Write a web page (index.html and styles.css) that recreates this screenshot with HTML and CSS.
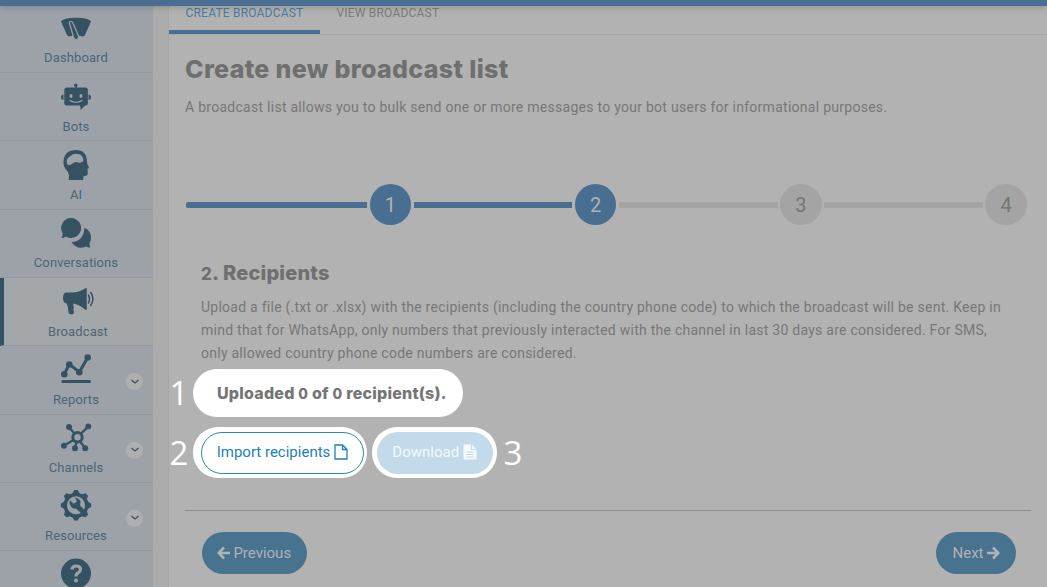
FILE: index.html
```html
<!DOCTYPE html>
<html lang="en">
<head>
<meta charset="utf-8">
<title>Create broadcast</title>
<link rel="stylesheet" href="styles.css">
</head>
<body>
<div class="topbar"></div>
<div class="app">
  <nav class="sidebar">
    <a class="item"><svg class="icon" viewBox="0 0 30 30"><path d="M0 7.500Q2 4 15 3.800Q28 4 30 7.500L24 21Q23 22.800 21 22.300Q15 20.500 9 22.300Q7 22.800 6 21Z"/><path class="needle" d="M8.300 8.500Q10 6 11.700 8.500L17.300 21.500Q18 25.500 15.300 25.500Q12.800 25.500 12.500 23Z"/></svg><span class="label">Dashboard</span></a>
    <a class="item"><svg class="icon" viewBox="0 0 30 30"><rect x="3.300" y="5.500" width="23.600" height="18" rx="2.500"/><path d="M2.500 12.500V18Q0 18 0 15.300Q0 12.500 2.500 12.500ZM27.500 12.500V18Q30 18 30 15.300Q30 12.500 27.500 12.500ZM19 23H24.500L19.800 28Z"/><path class="line thin" d="M15.200 6V3.500"/><circle cx="14.700" cy="3.300" r="1.700"/><g class="hole"><ellipse cx="10" cy="14" rx="1.500" ry="2"/><ellipse cx="20" cy="14" rx="1.500" ry="2"/></g><path class="cut" d="M9 18.500Q15 22 21 18.500"/></svg><span class="label">Bots</span></a>
    <a class="item"><svg class="icon" viewBox="0 0 30 30"><path d="M7.700 30L8 25Q7.500 22 5 19.500Q2 16 2.500 11Q3.500 0 15 0Q25.500 0 26 11.500Q26 13.500 27 15.500L28 17.500Q28 18.500 26.500 18.700L26.800 23.500Q26.600 26.300 22.500 26.200L22 30Z"/><path class="hole" d="M5.700 12Q5.500 8 9 6.500Q12 3 16 4Q20 3.800 21.500 7Q23 9 22 11.500Q20 13.500 15.500 12Q12.500 12.300 11.500 13.500Q8.500 16 6.500 14.500Z"/></svg><span class="label">AI</span></a>
    <a class="item"><svg class="icon" viewBox="0 0 30 30"><path d="M23.500 8.700Q30 11.500 30 19Q30 22.500 28.400 24.800Q28.500 27 29.500 28.500Q27 28.700 25 27.500Q16 31.500 10.500 23Q22.500 22.500 23.500 8.700Z"/><path d="M10.300-1A10 10 0 1 1 4.800 17.500Q3 19.300 .3 18.800Q1.800 17 1.700 14.200A10 10 0 0 1 10.300-1Z"/></svg><span class="label">Conversations</span></a>
    <a class="item active"><svg class="icon" viewBox="0 0 30 30"><path d="M3 5.500H9Q16 5.500 22 1.500Q23.800.500 23.800 2V22Q23.800 23.500 22 22.500Q17 18 10.500 16.500Q9.500 18.500 11 20Q9.700 22 10.800 24V26Q10.800 27.300 9 27.300H7Q5.500 27 5.500 25Q5.500 20 3.700 16.500Q0 16 0 11Q0 6 3 5.500Z"/><path class="line thin" d="M25.500 8Q27.500 12 25.500 16M27.800 5.500Q32 12 27.800 18.500"/></svg><span class="label">Broadcast</span></a>
    <a class="item"><svg class="icon" viewBox="0 0 30 30"><path class="line" d="M3.300 19.200L8.300 9.200L18.300 17.200L26.700 2.500M1.800 26.500H28.500"/><circle cx="3.300" cy="19.200" r="3.300"/><circle cx="8.300" cy="9.500" r="3.300"/><circle cx="18.300" cy="17.300" r="3.300"/><circle cx="26.700" cy="2.500" r="3.300"/></svg><span class="label">Reports</span><span class="toggle"><svg viewBox="0 0 10 6"><path d="M1.500 1L5 4L8.500 1"/></svg></span></a>
    <a class="item"><svg class="icon" viewBox="0 0 30 30"><path class="line mid" d="M8 3L13.500 9.700M27.300 2.400L20 9.800M3 21.500L12.700 16M15.500 18L14 24M19 17.500L24 24"/><circle class="line" cx="16.500" cy="13.300" r="4.700"/><circle cx="8" cy="3" r="3"/><circle cx="27.300" cy="2.400" r="2.900"/><circle cx="3" cy="21.700" r="3"/><circle cx="14" cy="24.200" r="3"/><circle cx="24.200" cy="24.200" r="3"/></svg><span class="label">Channels</span><span class="toggle"><svg viewBox="0 0 10 6"><path d="M1.500 1L5 4L8.500 1"/></svg></span></a>
    <a class="item"><svg class="icon" viewBox="0 0 30 30"><g transform="translate(15 13.300)"><circle r="12.600"/><g id="teeth"><path d="M-4-11L-1.800-15.200H1.800L4-11ZM-4 11L-1.800 15.200H1.800L4 11ZM-11-4L-15.200-1.800V1.800L-11 4ZM11-4L15.200-1.800V1.800L11 4Z"/></g><use href="#teeth" transform="rotate(45)"/><circle class="hole" r="9"/><path d="M-1.500-7.500Q2-8 4-5Q5-3 4 0L8.600 5L5.500 8.300L0 3.300Q-4 4-6-.500Q-7-3-6-5L-2.500-1.500L.500-3.200L.500-5.500Z"/></g></svg><span class="label">Resources</span><span class="toggle"><svg viewBox="0 0 10 6"><path d="M1.500 1L5 4L8.500 1"/></svg></span></a>
    <a class="item"><svg class="icon" viewBox="0 0 30 30"><circle cx="15" cy="13.500" r="15"/><path class="cut question" d="M10.800 9.500Q11.500 6 15.300 6Q19.500 6 19.500 9.500Q19.500 11.500 17 13Q15 14 15 16.500"/><circle class="hole" cx="15" cy="20.500" r="2"/></svg></a>
  </nav>
  <main class="main">
    <div class="tabs"><a class="tab current">CREATE BROADCAST</a><a class="tab">VIEW BROADCAST</a></div>
    <header class="intro">
      <h1>Create new broadcast list</h1>
      <p>A broadcast list allows you to bulk send one or more messages to your bot users for informational purposes.</p>
    </header>
    <div class="stepper">
      <div class="step done"><i></i><b>1</b></div>
      <div class="step done"><i></i><b>2</b></div>
      <div class="step"><i></i><b>3</b></div>
      <div class="step"><i></i><b>4</b></div>
    </div>
    <section class="recipients">
      <h2><small>2</small>. Recipients</h2>
      <p>Upload a file (.txt or .xlsx) with the recipients (including the country phone code) to which the broadcast will be sent. Keep in<br>mind that for WhatsApp, only numbers that previously interacted with the channel in last 30 days are considered. For SMS,<br>only allowed country phone code numbers are considered.</p>
    </section>
    <div class="row count">
      <span class="callout">1</span>
      <div class="spot uploaded"><h3>Uploaded <small>0</small> of <small>0</small> recipient(s).</h3></div>
    </div>
    <div class="row actions">
      <span class="callout">2</span>
      <div class="spot import-spot"><button class="btn outline">Import recipients<svg width="14" height="16" viewBox="0 0 14 16"><path d="M1 1H8.500L13 5.500V15H1ZM8.500 1V5.500H13" fill="none" stroke="currentColor" stroke-width="1.300"/></svg></button></div>
      <div class="spot download-spot"><button class="btn disabled">Download<svg width="14" height="16" viewBox="0 0 14 16"><path fill="currentColor" fill-rule="evenodd" d="M1 .500H8V6H13.500V15.500H.500V1ZM9 .500L13.500 5H9ZM3.500 7.500V8.500H10.500V7.500ZM3.500 10V11H10.500V10ZM3.500 12.500V13.500H10.500V12.500Z"/></svg></button></div>
      <span class="callout after">3</span>
    </div>
    <footer class="footer">
      <button class="btn solid"><svg width="13" height="14" viewBox="0 0 13 14"><path d="M7 1.500L1.800 7L7 12.500M2 7H13" fill="none" stroke="currentColor" stroke-width="2.600"/></svg>Previous</button>
      <button class="btn solid next">Next<svg width="13" height="14" viewBox="0 0 13 14"><path d="M6 1.500L11.200 7L6 12.500M11 7H0" fill="none" stroke="currentColor" stroke-width="2.600"/></svg></button>
    </footer>
  </main>
</div>
</body>
</html>
```

FILE: styles.css
```css
* { box-sizing: border-box; }
body { margin: 0; width: 1047px; height: 587px; overflow: hidden; background: #acacad; color: #777; font-family: Roboto, sans-serif; font-size: 14px; }
h1, h2, h3, p { margin: 0; }
.topbar { position: absolute; z-index: 2; top: 0; left: 0; width: 100%; height: 6px; background: #486f91; box-shadow: 0 1px 6px rgba(0, 0, 0, .22); }
.app { display: flex; height: 587px; overflow: hidden; }

.sidebar { width: 153px; flex: none; padding-top: 4.8px; background: #9da2a9; }
.item { --bg: #9da2a9; position: relative; display: flex; flex-direction: column; align-items: center; height: 68.3px; padding: 9px 1px 0 0; border-bottom: 1px solid #9499a1; background: var(--bg); color: #4c6574; }
.item.active { --bg: #a3a7a9; border-left: 4px solid #355263; }
.icon { width: 30px; height: 30px; flex: none; overflow: visible; fill: #355263; }
.line { fill: none; stroke: #355263; stroke-width: 3; stroke-linecap: round; stroke-linejoin: round; }
.line.thin { stroke-width: 1.5; }
.line.mid { stroke-width: 2.3; }
.hole { fill: var(--bg); }
.needle { stroke: var(--bg); stroke-width: 1.2; }
.cut { fill: none; stroke: var(--bg); stroke-width: 1.2; stroke-linecap: round; }
.cut.question { stroke-width: 3.2; stroke-linecap: butt; }
.label { margin-top: 6.6px; font-size: 13px; line-height: 16px; letter-spacing: .1px; }
.toggle { position: absolute; right: 10px; top: 27px; display: flex; align-items: center; justify-content: center; width: 17px; height: 17px; border-radius: 50%; background: #afafaf; }
.toggle svg { width: 10px; height: 6px; fill: none; stroke: #355263; stroke-width: 1.3; }

.main { flex: 1; margin-left: 15px; border-left: 1px solid #a5a5aa; background: #b2b2b2; }
.tabs { display: flex; height: 35px; border-bottom: 1px solid #a7a7aa; }
.tab { height: 34px; padding: 5px 17px 0 16.500px; font-size: 12px; line-height: 16px; letter-spacing: .2px; color: #7d7d7d; }
.tab.current { width: 151px; color: #4a7ba2; border-bottom: 4px solid #486f91; padding-right: 0; }
.intro { padding: 18px 0 0 16px; height: 149px; }
h1, h2, h3 { font-family: Inter, sans-serif; font-weight: 800; color: #6f6f6f; white-space: nowrap; }
h1 { font-size: 25px; line-height: 32px; letter-spacing: .34px; }
.intro p { margin-top: 11px; line-height: 23px; letter-spacing: .27px; white-space: nowrap; }

.stepper { display: grid; grid-template-columns: 225.500px repeat(3, 1fr); height: 41px; margin: 0 20px 0 16.500px; }
.step { display: flex; align-items: center; gap: 2.500px; }
.step + .step { padding-left: 2.500px; }
.step i { flex: 1; height: 6px; background: #a4a4a4; }
.step:first-child i { border-radius: 2px 0 0 2px; }
.step b { width: 41.500px; height: 41px; border-radius: 50%; background: #a4a4a4; color: #757575; font-size: 20px; font-weight: 400; line-height: 43px; text-align: center; }
.step.done i, .step.done b { background: #486f91; }
.step.done b { color: #b2b2b2; }

.recipients { height: 144px; padding: 35px 0 0 32px; }
h2 { font-size: 20px; line-height: 26px; letter-spacing: .2px; }
h2 small { font-size: 17px; }
.recipients p { margin-top: 9px; line-height: 23px; letter-spacing: .255px; white-space: nowrap; }

.row { display: flex; align-items: center; }
.callout { width: 24px; padding-right: 4px; color: #fff; font-family: "Open Sans", sans-serif; font-size: 33px; font-weight: 400; line-height: 40px; text-align: center; }
.spot { display: flex; align-items: center; height: 48px; border-radius: 24px; background: #fff; }
.uploaded { width: 270px; padding-left: 24px; }
h3 { font-size: 16px; color: #757575; letter-spacing: .22px; }
h3 small { font-size: 14px; }
.actions { margin-top: 10px; }
.actions .spot { height: 51px; border-radius: 25px; }
.import-spot { width: 174px; padding-left: 8px; }
.download-spot { width: 125px; margin-left: 5px; padding-left: 5px; }
.after { margin-left: 4px; padding: 0; }

.btn { display: flex; align-items: center; justify-content: center; gap: 4px; height: 42px; padding: 0 0 1px; border: 0; border-radius: 21px; font-family: Roboto, sans-serif; font-size: 15px; white-space: nowrap; }
.actions .btn { padding-bottom: 2px; }
.btn svg { flex: none; }
.outline { width: 163px; border: 1.500px solid #2d86b8; background: #fff; color: #1e80b6; }
.disabled { width: 115.500px; background: #c2daea; color: #f4f9fc; }
.solid { width: 105.500px; background: #47738f; color: #b2b2b2; gap: 3px; }
.solid.next { width: 80px; }
.footer { display: flex; justify-content: space-between; margin: 32px 16px 0; padding: 21px 15px 0 16.500px; border-top: 1px solid #919191; }
```
